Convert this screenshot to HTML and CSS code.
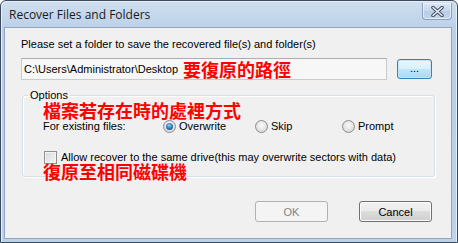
FILE: index.html
```html
<!DOCTYPE html>
<html>
<head>
<meta charset="utf-8">
<link rel="stylesheet" href="styles.css">
</head>
<body>
<div class="window">
  <div class="titlebar">
    <span class="title">Recover Files and Folders</span>
    <span class="close">
      <svg width="15" height="11" viewBox="0 0 15 11">
        <path d="M3 1.5 L12 9.5 M12 1.5 L3 9.5" stroke="#3d4f66" stroke-width="3.6" stroke-linecap="round"/>
        <path d="M3 1.5 L12 9.5 M12 1.5 L3 9.5" stroke="#e8eef6" stroke-width="1.6" stroke-linecap="round"/>
      </svg>
    </span>
  </div>
  <div class="client">
    <p class="prompt">Please set a folder to save the recovered file(s) and folder(s)</p>
    <div class="path-row">
      <div class="field"><span class="path">C:\Users\Administrator\Desktop</span><span class="note">要復原的路徑</span></div>
      <span class="btn browse">...</span>
    </div>
    <fieldset class="options">
      <legend>Options</legend>
      <div class="note note-exist">檔案若存在時的處裡方式</div>
      <div class="radio-row">
        <span class="label">For existing files:</span>
        <span class="radio checked"><span class="dot"></span>Overwrite</span>
        <span class="radio"><span class="dot"></span>Skip</span>
        <span class="radio"><span class="dot"></span>Prompt</span>
      </div>
      <div class="check"><span class="box"></span>Allow recover to the same drive(this may overwrite sectors with data)</div>
      <div class="note note-drive">復原至相同磁碟機</div>
    </fieldset>
    <div class="actions">
      <span class="btn disabled">OK</span>
      <span class="btn">Cancel</span>
    </div>
  </div>
</div>
</body>
</html>
```

FILE: styles.css
```css
* { box-sizing: border-box; }
html, body { margin: 0; padding: 0; }
body {
  width: 458px;
  height: 243px;
  font-family: "Liberation Sans", Arial, sans-serif;
  font-size: 11px;
  color: #000;
  background: #fff;
}
.window {
  width: 458px;
  height: 243px;
  border: 1px solid #3b4a5e;
  border-radius: 6px 6px 0 0;
  background: linear-gradient(#cfdeef, #b9cfe8 30px, #bcd2ea);
  display: flex;
  flex-direction: column;
  padding: 0 5px 3px 3px;
  box-shadow: inset 1px 1px 0 #e6eef8, inset -1px 0 0 #e6eef8;
}
.titlebar {
  height: 26px;
  flex: none;
  display: flex;
  align-items: center;
  justify-content: space-between;
  padding-left: 5px;
}
.title {
  font-family: "Open Sans", "Liberation Sans", sans-serif;
  font-size: 12px;
  color: #1a1a1a;
  margin-top: 1px;
}
.close {
  width: 30px;
  height: 17px;
  margin-top: -5px;
  margin-right: 0;
  border: 1px solid #8ba1bd;
  border-radius: 0 0 4px 4px;
  border-top: none;
  background: linear-gradient(#dae5f2, #c6d7ec 50%, #b8cde6 51%, #c3d6ec);
  box-shadow: inset 0 0 0 1px rgba(255,255,255,0.55);
  display: flex;
  align-items: center;
  justify-content: center;
}
.client {
  flex: 1;
  background: #f0f0f0;
  border: 1px solid #8fa5c2;
  padding: 9px 19px 0 16px;
  display: flex;
  flex-direction: column;
}
.prompt {
  margin: 0;
  line-height: 14px;
}
.path-row {
  display: flex;
  align-items: center;
  gap: 10px;
  margin-top: 7px;
}
.field {
  width: 366px;
  height: 22px;
  border: 1px solid #c8cbd0;
  border-top-color: #abadb3;
  background: #f7f7f7;
  display: flex;
  align-items: center;
  padding-left: 2px;
  gap: 5px;
}
.note {
  font-family: "Noto Sans CJK TC", "Noto Sans CJK SC", sans-serif;
  font-weight: 700;
  font-size: 18px;
  color: #ff0000;
  line-height: 18px;
  white-space: nowrap;
}
.btn {
  display: flex;
  align-items: center;
  justify-content: center;
  height: 21px;
  border: 1px solid #707070;
  border-radius: 3px;
  background: linear-gradient(#f2f2f2, #ebebeb 49%, #dddddd 50%, #cfcfcf);
  box-shadow: inset 0 0 0 1px #fcfcfc;
  font-size: 11px;
  color: #000;
}
.browse {
  width: 35px;
  height: 20px;
  border-color: #3c7fb1;
  background: linear-gradient(#eaf6fd, #d9f0fc 49%, #bee6fd 50%, #a7d9f5);
  box-shadow: inset 0 0 0 1px #c4e5f6;
  padding-bottom: 2px;
}
.options {
  margin: 8px 0 0 1px;
  width: 413px;
  border: 1px solid #d5dfe5;
  border-radius: 3px;
  box-shadow: inset 1px 1px 0 #fff, 1px 1px 0 #fff;
  padding: 0 0 0 20px;
  min-width: 0;
}
.options legend {
  padding: 0 2px;
  margin-left: -15px;
  line-height: 14px;
}
.note-exist {
  margin-top: -1px;
}
.radio-row {
  display: grid;
  grid-template-columns: 120px 92px 87px auto;
  align-items: center;
  margin-top: 0;
  line-height: 14px;
}
.radio {
  display: flex;
  align-items: center;
  gap: 3px;
}
.dot {
  width: 13px;
  height: 13px;
  border-radius: 50%;
  border: 1px solid #8d8d8d;
  background: radial-gradient(circle at 50% 40%, #fbfbfb, #dcdcdc 70%, #c8c8c8);
  display: flex;
  align-items: center;
  justify-content: center;
}
.checked .dot::after {
  content: "";
  width: 7px;
  height: 7px;
  border-radius: 50%;
  background: radial-gradient(circle at 45% 35%, #8fd1f7, #2a6fb0 55%, #1b4a7c);
}
.check {
  display: flex;
  align-items: center;
  gap: 4px;
  margin-top: 17px;
  margin-left: 1px;
  line-height: 14px;
}
.box {
  width: 13px;
  height: 13px;
  border: 1px solid #8e8f8f;
  background: linear-gradient(135deg, #d9d9d9, #f4f4f4);
  box-shadow: inset 0 0 0 1px #f4f4f4;
}
.note-drive {
  margin-top: -2px;
  margin-bottom: -4px;
}
.actions {
  display: flex;
  justify-content: flex-end;
  gap: 31px;
  margin-top: 24px;
  padding-right: 0;
}
.actions .btn {
  width: 73px;
}
.btn.disabled {
  border-color: #adb2b5;
  background: #f4f4f4;
  box-shadow: none;
  color: #838383;
}
```
